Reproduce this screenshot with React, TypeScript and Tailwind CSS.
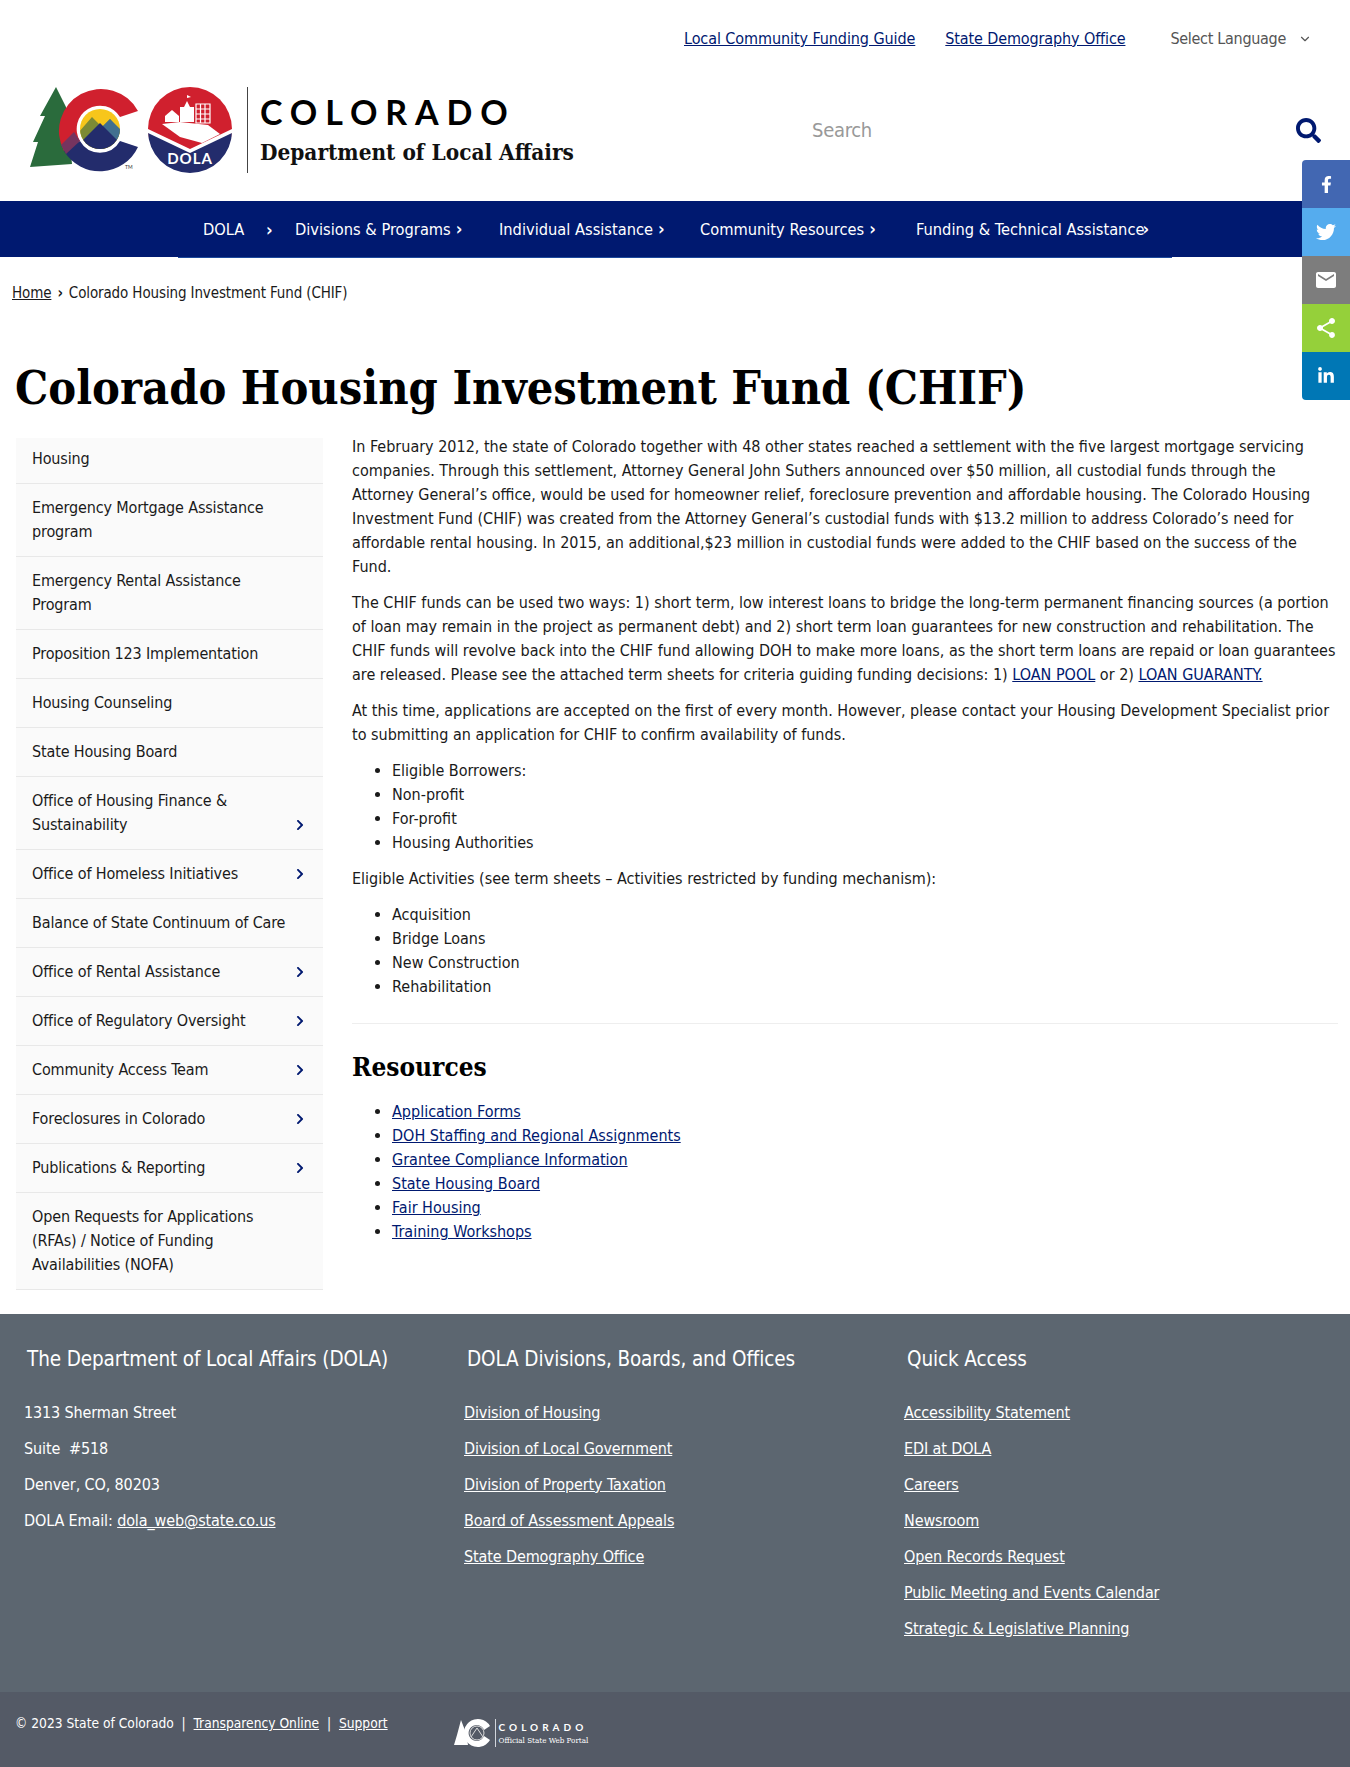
import { FaFacebookF, FaTwitter, FaLinkedinIn, FaSearch, FaChevronRight } from 'react-icons/fa';
import { MdEmail, MdShare } from 'react-icons/md';
import { ChevronDown } from 'lucide-react';

const sideItems: { label: string; arrow?: boolean }[] = [
  { label: 'Housing' },
  { label: 'Emergency Mortgage Assistance program' },
  { label: 'Emergency Rental Assistance Program' },
  { label: 'Proposition 123 Implementation' },
  { label: 'Housing Counseling' },
  { label: 'State Housing Board' },
  { label: 'Office of Housing Finance & Sustainability', arrow: true },
  { label: 'Office of Homeless Initiatives', arrow: true },
  { label: 'Balance of State Continuum of Care' },
  { label: 'Office of Rental Assistance', arrow: true },
  { label: 'Office of Regulatory Oversight', arrow: true },
  { label: 'Community Access Team', arrow: true },
  { label: 'Foreclosures in Colorado', arrow: true },
  { label: 'Publications & Reporting', arrow: true },
  { label: 'Open Requests for Applications (RFAs) / Notice of Funding Availabilities (NOFA)' },
];

const footerCols = [
  {
    title: 'DOLA Divisions, Boards, and Offices',
    links: ['Division of Housing', 'Division of Local Government', 'Division of Property Taxation', 'Board of Assessment Appeals', 'State Demography Office'],
  },
  {
    title: 'Quick Access',
    links: ['Accessibility Statement', 'EDI at DOLA', 'Careers', 'Newsroom', 'Open Records Request', 'Public Meeting and Events Calendar', 'Strategic & Legislative Planning'],
  },
];

const navItems = [
  { label: 'Divisions & Programs', width: 'w-[204px]' },
  { label: 'Individual Assistance', width: 'w-[201px]' },
  { label: 'Community Resources', width: 'w-[216px]' },
];

function Logo() {
  return (
    <svg width="218" height="90" viewBox="0 0 218 90" className="shrink-0">
      <defs>
        <clipPath id="sun"><circle cx="70" cy="44" r="20" /></clipPath>
      </defs>
      <path d="M26 2 L36 22 L42 79 L0 82 L8 57 L3 57 L15 31 L10 31 Z" fill="#2a6b3c" />
      <path d="M108 26 A42 42 0 1 0 34 66 L50 56 A23 23 0 1 1 90 32 Z" fill="#d0202e" />
      <path d="M34 66 A42 42 0 0 0 108 62 L90 56 A23 23 0 0 1 50 56 Z" fill="#232c6c" />
      <path d="M31 60 L44 47 L50 56 L36 69 Z" fill="#75345f" />
      <circle cx="70" cy="44" r="22" fill="#fff" />
      <g clipPath="url(#sun)">
        <rect x="48" y="22" width="44" height="44" fill="#f7c61b" />
        <path d="M48 48 L62 32 L72 42 L80 34 L92 48 V66 H48 Z" fill="#7c8a35" />
        <path d="M72 42 L80 34 L92 46 V60 Z" fill="#42708f" />
        <path d="M48 60 L70 38 L92 60 V66 H48 Z" fill="#232c6c" />
      </g>
      <circle cx="160" cy="44" r="42" fill="#d0202e" />
      <path d="M118 46 L160 66 L202 46 A42 42 0 0 1 118 46 Z" fill="#232c6c" />
      <path d="M118 44 L160 64 L202 44 L202 48 L160 68 L118 48 Z" fill="#fff" />
      <path d="M132 39 L150 37 L178 40 L190 49 L172 58 L150 52 Z" fill="#fff" />
      <path d="M135 31 L142 25 L149 31 V37 H135 Z" fill="#fff" />
      <path d="M150 22 H154 L157 16 L160 22 H164 V37 H150 Z" fill="#fff" />
      <path d="M157 16 V10 L161 12 L157 13" fill="#fff" />
      <path d="M166 19 H180 V38 H166 Z M170.5 19 V38 M175 19 V38 M166 24 H180 M166 29 H180 M166 34 H180" fill="none" stroke="#fff" strokeWidth="1.2" />
      <text x="160" y="79" textAnchor="middle" fill="#fff" fontSize="15" fontWeight="700" letterSpacing="1" fontFamily="Lato, sans-serif">DOLA</text>
      <text x="95" y="84" fill="#333" fontSize="5" fontFamily="Lato, sans-serif">TM</text>
    </svg>
  );
}

function FooterLogo() {
  return (
    <div className="flex items-center ml-[66px] mt-[7px]">
      <svg width="38" height="30" viewBox="0 0 38 30">
        <path d="M7 2 L12 15 L14 27 L0 27 L3 17 Z" fill="#fff" />
        <path d="M36 8 A14 14 0 1 0 36 22 L30 18 A8 8 0 1 1 30 12 Z" fill="#fff" />
        <circle cx="23" cy="15" r="7" fill="none" stroke="#ddd" strokeWidth="1" />
        <path d="M17 19 L23 10 L29 19" fill="none" stroke="#ddd" strokeWidth="1" />
      </svg>
      <div className="w-px h-[28px] bg-gray-300 ml-[3px] mr-[3px]" />
      <div className="text-white leading-none">
        <div className="text-[10px] font-bold tracking-[4px] font-['Lato']">COLORADO</div>
        <div className="text-[8px] mt-[5px] font-['DejaVu_Serif']">Official State Web Portal</div>
      </div>
    </div>
  );
}

export default function App() {
  return (
    <div className="relative bg-white text-[#1a1a1a] font-['DejaVu_Sans',sans-serif] font-stretch-condensed text-[16px] leading-6 w-[1350px]">
      {/* share rail */}
      <div className="absolute right-0 top-[160px] w-[48px] z-10 text-white rounded-l overflow-hidden">
        <div className="h-12 flex items-center justify-center bg-[#4267b2]"><FaFacebookF size={17} /></div>
        <div className="h-12 flex items-center justify-center bg-[#55acee]"><FaTwitter size={20} /></div>
        <div className="h-12 flex items-center justify-center bg-[#7d7d7d]"><MdEmail size={24} /></div>
        <div className="h-12 flex items-center justify-center bg-[#95d03a]"><MdShare size={24} /></div>
        <div className="h-12 flex items-center justify-center bg-[#0077b5]"><FaLinkedinIn size={18} /></div>
      </div>

      <header className="h-[201px]">
        <div className="flex items-center justify-end h-[78px] pr-[38px]">
          <a className="underline text-[#001970] mr-[30px] tracking-[-0.08px]">Local Community Funding Guide</a>
          <a className="underline text-[#001970] mr-[45px] tracking-[-0.12px]">State Demography Office</a>
          <span className="text-[#555] tracking-[-0.3px]">Select Language</span>
          <ChevronDown size={14} className="ml-[12px] text-[#555]" />
        </div>
        <div className="flex items-center pl-[30px] h-[90px] mt-[7px]">
          <Logo />
          <div className="w-px h-[86px] bg-[#444] ml-[-1px]" />
          <div className="ml-[12px] w-[316px] shrink-0">
            <div className="font-['Lato'] font-bold text-[34px] tracking-[7.9px] leading-[36px] text-black">COLORADO</div>
            <div className="font-['DejaVu_Serif'] font-stretch-condensed font-bold text-[22.4px] leading-[30px] mt-[7px] text-[#111]">Department of Local Affairs</div>
          </div>
          <span className="ml-[236px] text-[20px] text-[#999] tracking-[-0.3px]">Search</span>
          <FaSearch size={25} className="ml-[424px] text-[#001970]" />
        </div>
      </header>

      <nav className="text-white">
        <div className="h-[56px] pt-px bg-[#001970] flex items-center pl-[203px] text-[16.3px]">
          <span className="w-[63px]">DOLA</span>
          <span className="w-[29px] font-bold text-[18px]">›</span>
          {navItems.map((n) => (
            <span key={n.label} className={`${n.width} shrink-0`}>
              {n.label}<span className="ml-[5px] font-bold text-[18px]">›</span>
            </span>
          ))}
          <span className="shrink-0">Funding &amp; Technical Assistance<span className="-ml-[2px] font-bold text-[18px]">›</span></span>
        </div>
        <div className="h-px mx-[178px] bg-[#1d4a9c]" />
      </nav>

      <div className="pl-3 pt-[23px] h-[72px] text-[15px] tracking-[-0.12px]">
        <a className="underline">Home</a>
        <span className="mx-[6px] font-bold">›</span>
        <span>Colorado Housing Investment Fund (CHIF)</span>
      </div>

      <h1 className="pl-[15px] font-['DejaVu_Serif'] font-stretch-condensed font-bold text-[46.5px] leading-[56px] text-black mt-[30px]">
        Colorado Housing Investment Fund (CHIF)
      </h1>

      <div className="flex mt-[22px]">
        <aside className="w-[307px] ml-[16px] shrink-0 tracking-[-0.15px]">
          {sideItems.map((it, i) => (
            <div key={it.label} className={`relative bg-[#fafafa] border-b border-[#e8e8e8] pl-4 pr-[30px] pb-3 ${i === 0 ? 'pt-[9px]' : 'pt-3'}`}>
              {it.label}
              {it.arrow && (
                <FaChevronRight size={12} className="absolute right-[17px] bottom-[18px] text-[#001970]" />
              )}
            </div>
          ))}
        </aside>

        <main className="ml-[29px] w-[986px] -mt-[3px]">
          <p>In February 2012, the state of Colorado together with 48 other states reached a settlement with the five largest mortgage servicing companies. Through this settlement, Attorney General John Suthers announced over $50 million, all custodial funds through the Attorney General’s office, would be used for homeowner relief, foreclosure prevention and affordable housing. The Colorado Housing Investment Fund (CHIF) was created from the Attorney General’s custodial funds with $13.2 million to address Colorado’s need for affordable rental housing. In 2015, an additional,$23 million in custodial funds were added to the CHIF based on the success of the Fund.</p>
          <p className="mt-3">The CHIF funds can be used two ways: 1) short term, low interest loans to bridge the long-term permanent financing sources (a portion of loan may remain in the project as permanent debt) and 2) short term loan guarantees for new construction and rehabilitation. The CHIF funds will revolve back into the CHIF fund allowing DOH to make more loans, as the short term loans are repaid or loan guarantees are released. Please see the attached term sheets for criteria guiding funding decisions: 1) <a className="underline text-[#001970]">LOAN POOL</a> or 2) <a className="underline text-[#001970]">LOAN GUARANTY.</a></p>
          <p className="mt-3">At this time, applications are accepted on the first of every month. However, please contact your Housing Development Specialist prior to submitting an application for CHIF to confirm availability of funds.</p>
          <ul className="mt-3 pl-10 list-disc">
            <li>Eligible Borrowers:</li>
            <li>Non-profit</li>
            <li>For-profit</li>
            <li>Housing Authorities</li>
          </ul>
          <p className="mt-3">Eligible Activities (see term sheets – Activities restricted by funding mechanism):</p>
          <ul className="mt-3 pl-10 list-disc">
            <li>Acquisition</li>
            <li>Bridge Loans</li>
            <li>New Construction</li>
            <li>Rehabilitation</li>
          </ul>
          <hr className="mt-[24px] border-[#eee]" />
          <h2 className="font-['DejaVu_Serif'] font-stretch-condensed font-bold text-[26px] leading-[32px] text-black mt-[27px]">Resources</h2>
          <ul className="mt-[17px] pl-10 list-disc">
            {['Application Forms', 'DOH Staffing and Regional Assignments', 'Grantee Compliance Information', 'State Housing Board', 'Fair Housing', 'Training Workshops'].map((l) => (
              <li key={l}><a className="underline text-[#001970]">{l}</a></li>
            ))}
          </ul>
        </main>
      </div>

      <footer className="mt-[24px] text-white">
        <div className="bg-[#5c6670] h-[378px] pt-[31px] flex pl-6 tracking-[-0.12px]">
          <div className="w-[440px]">
            <h3 className="text-[20.5px] leading-7 pl-[3px]">The Department of Local Affairs (DOLA)</h3>
            <div className="mt-[28px] flex flex-col gap-3">
              <div>1313 Sherman Street</div>
              <div>Suite &nbsp;#518</div>
              <div>Denver, CO, 80203</div>
              <div>DOLA Email: <a className="underline">dola_web@state.co.us</a></div>
            </div>
          </div>
          {footerCols.map((c) => (
            <div key={c.title} className="w-[440px]">
              <h3 className="text-[20.5px] leading-7 pl-[3px]">{c.title}</h3>
              <div className="mt-[28px] flex flex-col gap-3">
                {c.links.map((l) => <a key={l} className="underline">{l}</a>)}
              </div>
            </div>
          ))}
        </div>
        <div className="bg-[#545a66] h-[76px] pl-[15px] pt-[19px] flex items-start text-[13.7px]">
          <span>© 2023 State of Colorado &nbsp;|&nbsp; <a className="underline">Transparency Online</a> &nbsp;|&nbsp; <a className="underline">Support</a></span>
          <FooterLogo />
        </div>
      </footer>
    </div>
  );
}
